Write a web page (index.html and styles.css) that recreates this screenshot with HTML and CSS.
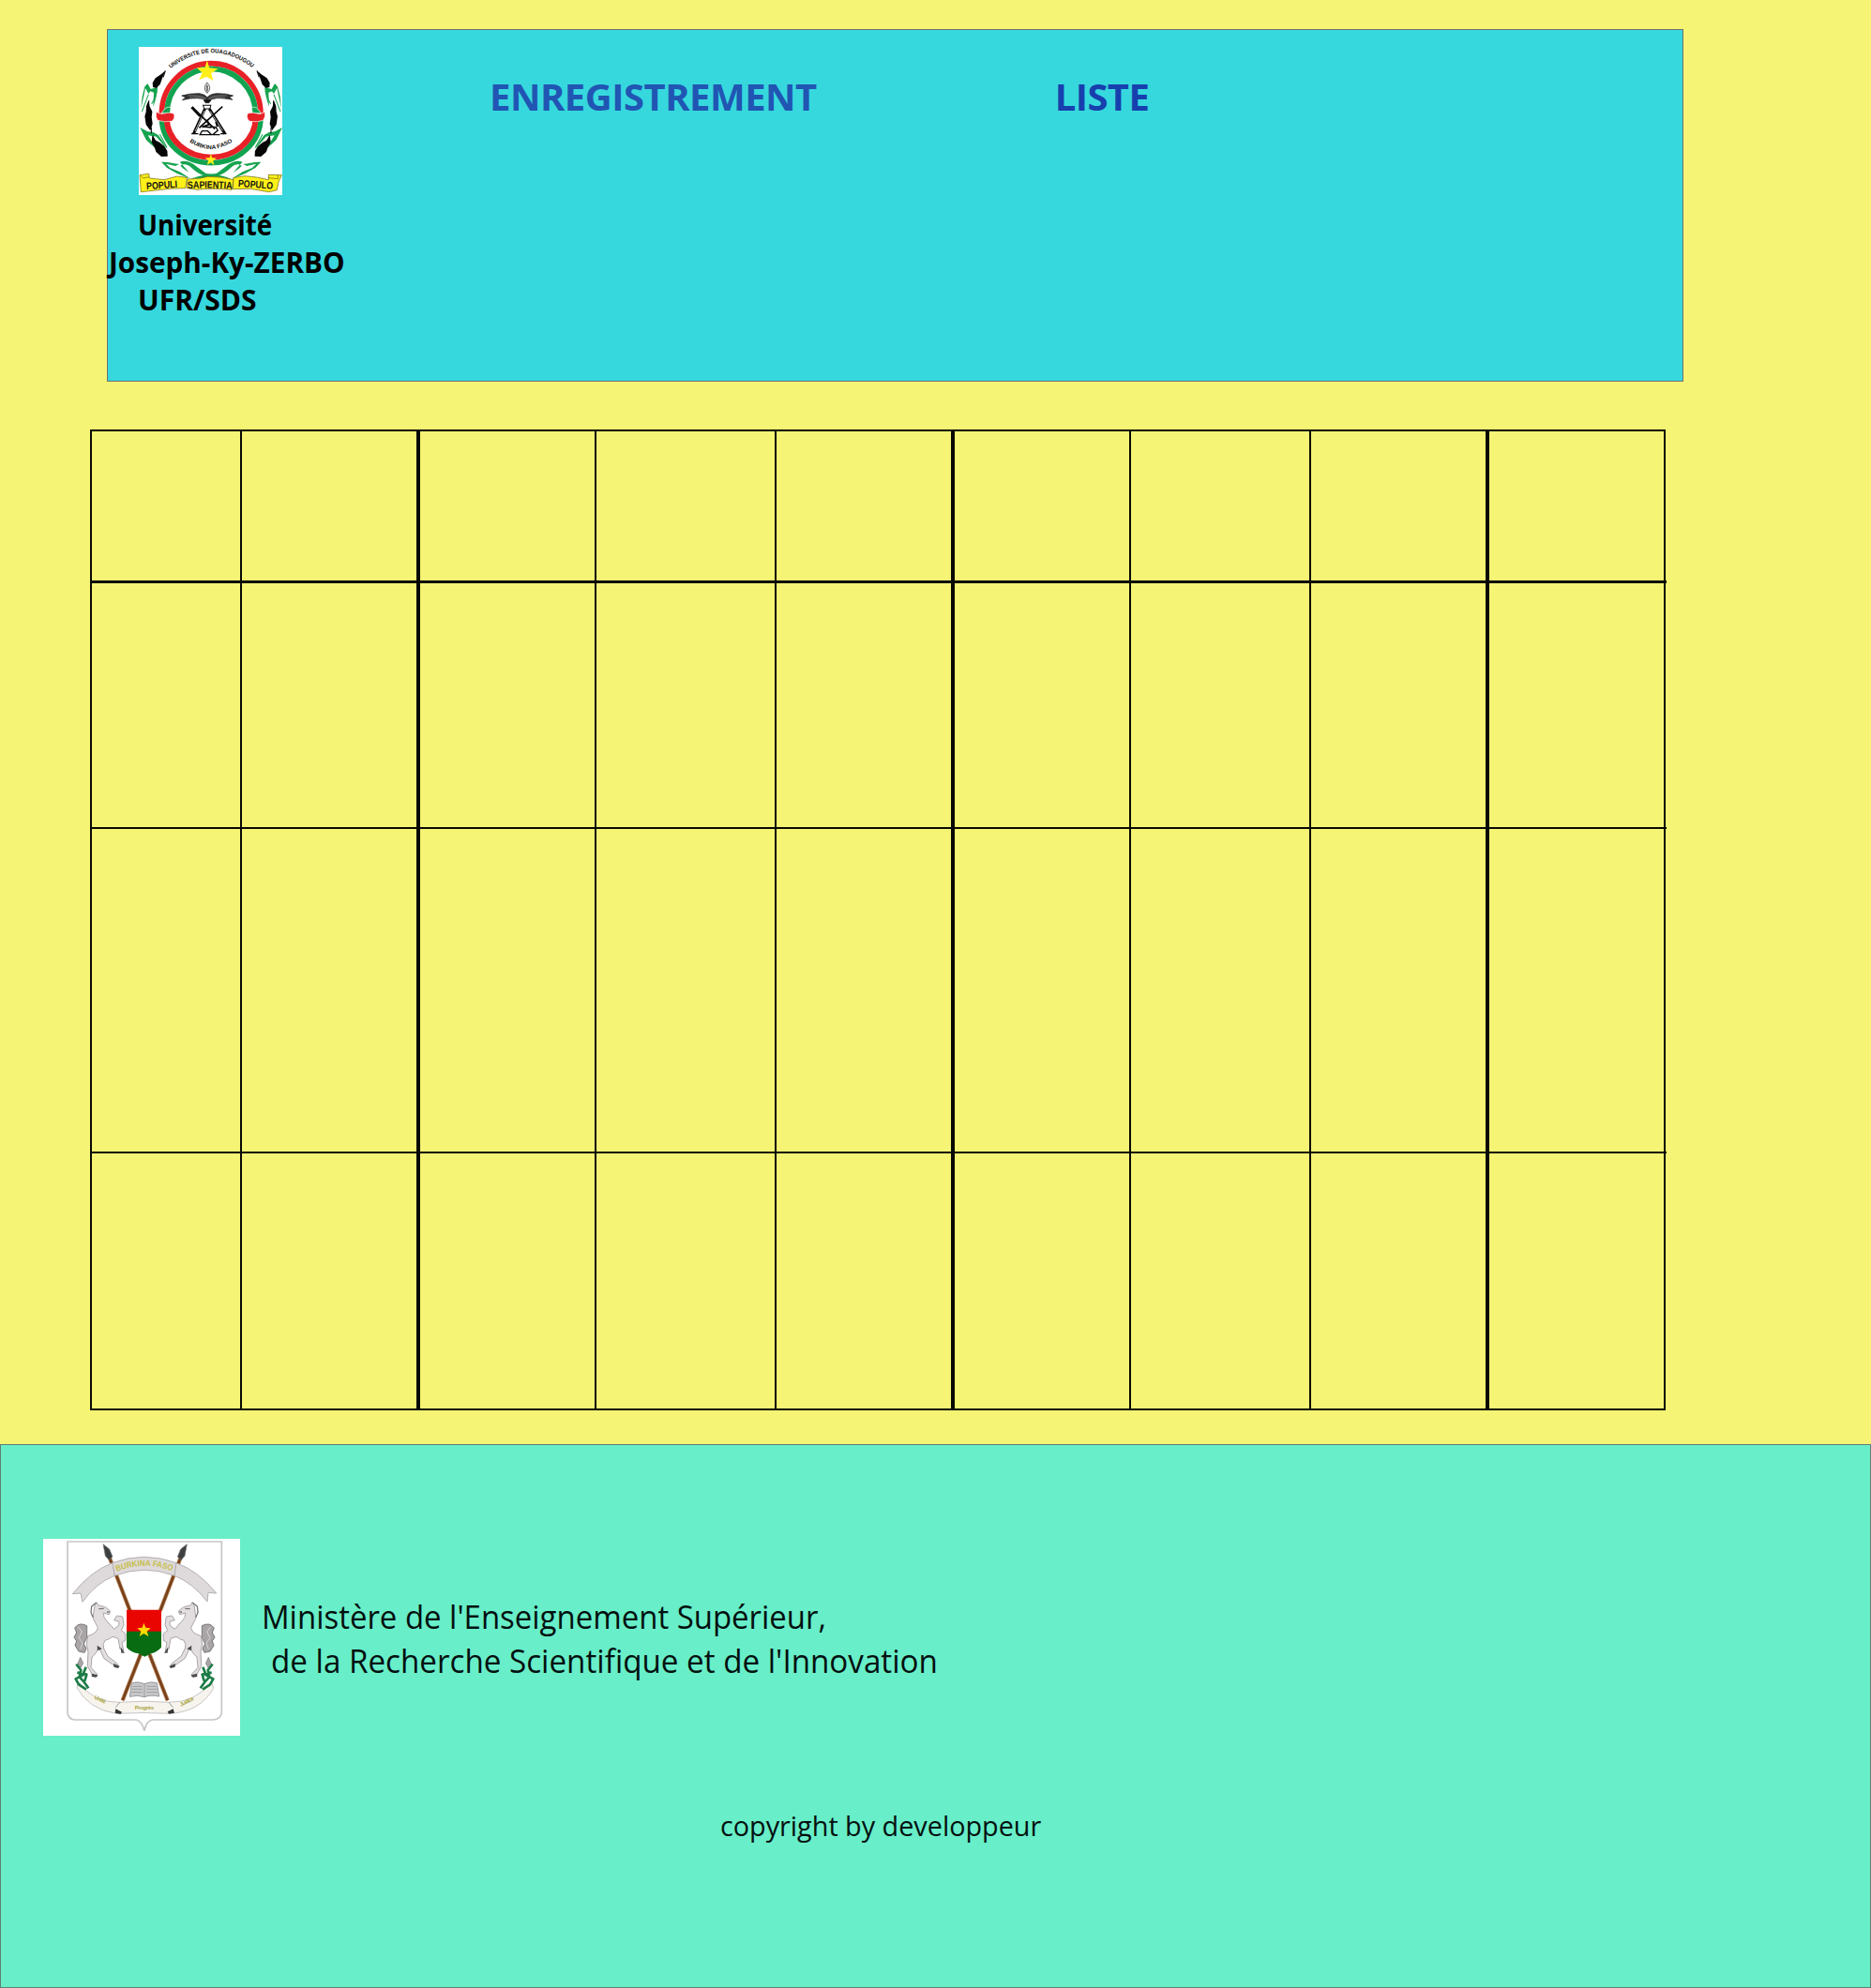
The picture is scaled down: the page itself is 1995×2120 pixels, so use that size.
FILE: index.html
```html
<!DOCTYPE html>
<html lang="fr">
<head>
<meta charset="utf-8">
<title>Université Joseph-Ky-ZERBO</title>
<link rel="stylesheet" href="styles.css">
</head>
<body>
<header class="header">
  <div class="brand">
    <svg class="brand-logo" viewBox="24 18 458 474" preserveAspectRatio="none" role="img" aria-label="Université de Ouagadougou">
      <defs>
        <path id="arc-top" d="M123 89Q254 -14 388 86"/>
        <path id="arc-bottom" d="M183 320Q254 371 327 318"/>
        <path id="motto-mid" d="M178 471Q250 468 326 473"/>
        <g id="branch">
          <path fill="#16a34f" d="M31 215L35 176 43 145 52 135 62 153 84 147 83 162 76 191 70 210 72 164 61 160 55 168 45 150 40 175Z"/>
          <path fill="#16a34f" d="M28 276L52 289 70 291 86 300 103 324 116 346 90 317 80 305 53 301 65 321 86 348 62 329 47 315Z"/>
          <path fill="none" stroke="#16a34f" stroke-width="3" d="M55 170L34 225M79 175L65 200M42 294L76 340M91 298L114 340"/>
          <path fill="#060606" d="M109 94L96 105 77 118 68 133 69 147 80 150 92 138 99 118Z"/>
          <path fill="#060606" d="M55 190L48 207 47 226 43 240 47 267 61 286 68 264 65 243 67 225 59 209Z"/>
          <path fill="#060606" d="M67 302L65 323 75 341 79 354 96 369 116 368 115 351 106 336 90 323 78 317Z"/>
          <path fill="none" stroke="#060606" stroke-width="3" d="M109 94L102 115M56 190V205M64 276V295M68 302L77 320"/>
          <path fill="#16a34f" d="M96 386C120 385 135 391 153 393L141 399 111 392 124 405 155 418 190 440 146 423 114 405Z"/>
          <path fill="#16a34f" d="M155 386C175 379 191 386 210 402L238 423C275 426 301 433 319 440L270 437C225 431 211 423 190 403 176 391 166 393 157 398L166 407 185 420Z"/>
        </g>
      </defs>
      <rect x="24" y="18" width="458" height="474" fill="#fff"/>
      <use href="#branch"/>
      <use href="#branch" transform="matrix(-1 0 0 1 510 0)"/>
      <g fill="none">
        <path stroke="#e82127" stroke-width="17" d="M97 232A158 161 0 0 1 413 232"/>
        <path stroke="#12a350" stroke-width="17" d="M114 232A141 144 0 0 1 396 232"/>
        <path stroke="#12a350" stroke-width="17" d="M97 244A158 145 0 0 0 413 244"/>
        <path stroke="#e82127" stroke-width="18" d="M113 244A142 127 0 0 0 397 244"/>
      </g>
      <g stroke="#fff" stroke-width="2">
        <path fill="#12a350" d="M96 230Q112 205 126 212L124 231Z"/>
        <path fill="#e82127" d="M80 226Q93 235 105 231 128 225 137 233 140 249 129 256 104 260 84 253 76 242 80 226Z"/>
        <path fill="#12a350" d="M414 230Q400 205 384 212L387 231Z"/>
        <path fill="#e82127" d="M426 226Q413 236 401 231 378 225 370 233 367 249 378 256 404 260 421 253 430 242 426 226Z"/>
      </g>
      <path fill="#ffef17" d="M242 61L249 85 277 88 255 103 262 126 240 113 216 124 227 101 209 85 235 84Z"/>
      <path fill="#ffef17" d="M254 361L258 373 272 374 261 383 265 397 254 388 242 395 246 382 236 373 250 373Z"/>
      <g class="seal-text">
        <text font-size="19"><textPath href="#arc-top" startOffset="3" textLength="284" lengthAdjust="spacingAndGlyphs">UNIVERSITE DE OUAGADOUGOU</textPath></text>
        <text font-size="18"><textPath href="#arc-bottom" startOffset="3" textLength="148" lengthAdjust="spacingAndGlyphs">BURKINA FASO</textPath></text>
      </g>
      <!-- flame and open book -->
      <g fill="none" stroke="#111" stroke-width="2">
        <path d="M242 132Q227 150 242 166 259 149 242 132ZM242 140Q238 151 242 160 247 151 242 140Z"/>
        <path fill="#333" d="M161 174Q190 166 217 167 236 170 242 180 251 169 272 167 300 166 325 174L313 179 323 187Q290 181 272 182 254 184 244 192 228 181 210 182 187 181 163 188L174 180Z"/>
        <path stroke="#aaa" stroke-width="1.5" d="M180 174Q218 170 238 183M186 180Q220 175 238 187M306 174Q266 170 247 183M300 180Q266 175 247 187"/>
        <path fill="#111" d="M231 188H255L248 197H237Z"/>
      </g>
      <!-- compass, pen and microscope -->
      <g stroke="#0a0a0a" fill="none">
        <path fill="#fff" stroke-width="3" d="M229 205H254L251 216H233Z"/>
        <path stroke-width="9" d="M235 216L199 296M249 216L299 296"/>
        <path stroke="#fff" stroke-width="2" d="M234 222L204 288M252 224L292 286"/>
        <path stroke-width="5" d="M291 209L217 277M194 211L267 281"/>
        <path stroke-width="9" d="M193 211L220 239"/>
        <path stroke-width="4" d="M192 296H214M285 296H304M219 299H256L244 287H226ZM251 273L270 275 276 285 260 299H283M228 273L256 276"/>
        <path stroke-width="6" d="M240 251L249 266 226 275M275 274L270 257"/>
      </g>
      <!-- motto ribbon -->
      <g fill="#fff01a" stroke="#675f08" stroke-width="2">
        <path d="M27 428L56 424 58 438 105 443 146 432 178 436 173 470 122 472 70 478 31 482Z"/>
        <path d="M480 428L438 427 438 443 400 435 362 431 326 437 325 473 380 472 439 482 465 476 470 450Z"/>
        <path d="M180 441Q216 442 243 433 281 432 326 443L321 475Q250 469 211 475L177 470Z"/>
        <path fill="none" d="M29 429L38 438 56 434M438 437L468 440V429"/>
      </g>
      <g class="seal-text">
        <text x="48" y="471" font-size="32" textLength="99" lengthAdjust="spacingAndGlyphs" transform="rotate(-4 97 464)">POPULI</text>
        <text font-size="32"><textPath href="#motto-mid" startOffset="2" textLength="142" lengthAdjust="spacingAndGlyphs">SAPIENTIA</textPath></text>
        <text x="341" y="469" font-size="32" textLength="111" lengthAdjust="spacingAndGlyphs" transform="rotate(4 396 460)">POPULO</text>
      </g>
    </svg>
    <h1 class="brand-name">
      <span class="brand-line indent narrow">Université</span>
      <span class="brand-line wide">Joseph-Ky-ZERBO</span>
      <span class="brand-line indent">UFR/SDS</span>
    </h1>
  </div>
  <nav class="nav">
    <a class="nav-link">ENREGISTREMENT</a>
    <a class="nav-link nav-list">LISTE</a>
  </nav>
</header>

<main class="table">
  <div class="row row-head"><i></i><i></i><i></i><i></i><i></i><i></i><i></i><i></i><i></i></div>
  <div class="row row-1"><i></i><i></i><i></i><i></i><i></i><i></i><i></i><i></i><i></i></div>
  <div class="row row-2"><i></i><i></i><i></i><i></i><i></i><i></i><i></i><i></i><i></i></div>
  <div class="row row-3"><i></i><i></i><i></i><i></i><i></i><i></i><i></i><i></i><i></i></div>
</main>

<footer class="footer">
  <div class="ministry">
    <svg class="arms" viewBox="18 33 630 630" role="img" aria-label="Burkina Faso">
      <defs>
        <path id="arms-arc" d="M250 139Q342 100 437 139"/>
        <g id="horse">
          <path fill="#a9a5a7" stroke="#77767a" stroke-width="3" d="M158 311Q133 298 119 318L125 333 117 348 125 360 120 374 132 393 150 397 156 384 148 369 158 349Z"/>
          <path fill="none" stroke="#d8d4d6" stroke-width="3" d="M130 314L142 330 132 350 144 366 137 386"/>
          <path fill="#e2dddf" stroke="#aaa5a8" stroke-width="3" d="M183 246L189 236 194 246Q220 248 233 265L229 275 211 270Q209 284 223 298 235 310 245 322L260 310 261 298 245 293 254 279 272 282 276 308 268 326 282 337 281 358 270 365 275 391 264 386 258 352 240 346Q231 354 216 358 207 369 212 384L225 409 254 431 259 442 243 437 213 416 195 378Q191 399 174 411L171 445 191 466 190 474 177 472 160 440 162 395 157 370 161 344Q190 336 193 317L177 286Z"/>
          <path fill="none" stroke="#77767a" stroke-width="4" d="M188 237L173 249 171 269 178 284M196 257L212 256M222 267L230 267"/>
          <path fill="#4b4a4c" d="M243 432L263 440 258 447 244 443ZM174 464L193 469 187 476 173 474ZM266 379L279 398 268 398ZM191 374L206 385 192 391Z"/>
          <path fill="none" stroke="#1d7c46" stroke-width="8" stroke-linejoin="round" d="M124 434L139 453 134 475 149 491 163 511M155 443L145 469 122 481 132 499 156 515M127 461L157 467 151 488"/>
          <path fill="#a9a5a7" stroke="#77767a" stroke-width="2" d="M137 412L129 432 138 445 146 431Z"/>
        </g>
        <g id="spear">
          <path stroke="#b98a5d" stroke-width="13" d="M230 92L296 264M330 402L272 550"/>
          <path stroke="#78401b" stroke-width="8" d="M230 92L296 264M330 402L272 550"/>
          <path fill="#3d4040" stroke="#777" stroke-width="2" d="M210 50L230 66 240 90 229 101 217 88Z"/>
        </g>
      </defs>
      <rect x="18" y="33" width="630" height="630" fill="#fff"/>
      <path fill="none" stroke="#c6c6c6" stroke-width="5" d="M96 42H589V592Q583 612 560 612H368Q348 615 342 647 333 615 316 612H120Q99 611 96 590Z"/>
      <path fill="#f7f4ee" stroke="#c9c5c4" stroke-width="3" d="M130 490Q177 558 263 556 343 549 420 556 506 557 557 490L563 511Q520 586 425 592 340 587 252 592 164 579 126 509Z"/>
      <use href="#spear"/>
      <use href="#spear" transform="matrix(-1 0 0 1 688 0)"/>
      <g fill="#dedadb" stroke="#b4b0b1" stroke-width="3">
        <path d="M240 110Q172 135 112 209L138 207 144 235Q188 173 247 151Z"/>
        <path d="M443 110Q513 134 572 207L546 205 543 234Q497 174 438 151Z"/>
        <path d="M240 110Q342 72 443 110L438 151Q342 114 247 151Z"/>
      </g>
      <text class="arms-name"><textPath href="#arms-arc" startOffset="4" textLength="181" lengthAdjust="spacingAndGlyphs">BURKINA FASO</textPath></text>
      <use href="#horse"/>
      <use href="#horse" transform="matrix(-1 0 0 1 684 0)"/>
      <path fill="#e80502" d="M285 260H396V330H285Z"/>
      <path fill="#086c12" d="M285 329H396V380Q382 396 363 400L343 410 322 400Q298 396 285 380Z"/>
      <path fill="#ffd900" d="M340 302L346 317 362 319 350 329 355 345 340 336 326 345 331 329 319 319 335 317Z"/>
      <path fill="#c9c8ca" stroke="#98989d" stroke-width="3" d="M301 494Q323 488 342 497 362 488 382 494L389 537Q362 531 342 539 319 531 295 538Z"/>
      <path fill="none" stroke="#88888d" stroke-width="2" d="M342 497V538M304 505H335M349 505H380M302 514H335M349 514H382M300 524H335M349 524H384"/>
      <path fill="none" stroke="#999" stroke-width="3" d="M263 556L250 572M420 556L433 572"/>
      <path fill="#353535" d="M250 577L270 587 266 594 248 590ZM434 577L416 586 420 593 438 590Z"/>
      <g class="arms-motto">
        <text x="180" y="544" textLength="39" transform="rotate(25 180 544)">Unité</text>
        <text x="311" y="579" textLength="61">Progrès</text>
        <text x="459" y="570" textLength="48" transform="rotate(-28 459 570)">Justice</text>
      </g>
    </svg>
    <p class="ministry-name">
      <span class="ministry-line first">Ministère de l'Enseignement Supérieur,</span>
      <span class="ministry-line second">de la Recherche Scientifique et de l'Innovation</span>
    </p>
  </div>
  <p class="copyright">copyright by developpeur</p>
</footer>
</body>
</html>
```
FILE: styles.css
```css
* {
  box-sizing: border-box;
}

body {
  margin: 0;
  width: 1995px;
  height: 2120px;
  display: flex;
  flex-direction: column;
  background: #f6f475;
  color: #03100f;
  font-family: "Open Sans", "Noto Sans", sans-serif;
}

h1,
p {
  margin: 0;
}

.header {
  display: flex;
  width: 1681px;
  height: 376px;
  margin: 31px 0 0 114px;
  border: 1px solid #707070;
  background: #36d8dd;
}

.brand {
  width: 407px;
  padding-top: 18px;
}

.brand-logo {
  display: block;
  width: 153px;
  height: 158px;
  margin-left: 33px;
}

.seal-text {
  fill: #101010;
  font-family: "Liberation Sans", sans-serif;
  font-weight: bold;
}

.brand-name {
  margin-top: 12px;
  padding-left: 1px;
  color: #000;
  font-size: 30px;
  font-weight: 700;
  line-height: 40px;
}

.brand-line {
  display: block;
  transform-origin: 0 0;
}

.indent {
  margin-left: 31px;
}

.narrow {
  transform: scaleX(0.925);
}

.wide {
  transform: scaleX(0.99);
}

.nav {
  display: flex;
  gap: 254px;
  padding-top: 44px;
  font-size: 40px;
  font-weight: 700;
  line-height: 54px;
  letter-spacing: -0.5px;
  color: #2155b3;
}

.nav-list {
  letter-spacing: -0.6px;
  color: #183fae;
}

.table {
  width: 1680px;
  height: 1046px;
  margin: 51px 0 36px 96px;
  border: 2px solid #080903;
}

.row {
  display: grid;
  grid-template-columns: 160px 190px 188px 192px 190px 188px 192px 190px 186px;
  width: 1679px;
  border-bottom: 2px solid #080903;
}

.row i {
  border-right: 2px solid #080903;
}

.row i:nth-child(3n + 2) {
  border-right-width: 4px;
}

.row i:last-child {
  border-right: 0;
}

.row-head {
  height: 162px;
  border-bottom-width: 3px;
}

.row-1 {
  height: 262px;
}

.row-2 {
  height: 346px;
}

.row-3 {
  height: 272px;
  border-bottom: 0;
}

.footer {
  height: 580px;
  padding: 100px 0 0 45px;
  border: 1px solid #5f7f75;
  background: #68eec8;
}

.ministry {
  display: flex;
  gap: 23px;
}

.arms {
  width: 210px;
  height: 210px;
}

.arms-name {
  fill: #c6bd49;
  font: bold 27px "Liberation Sans", sans-serif;
}

.arms-motto {
  fill: #aaa443;
  font: bold 18px "Liberation Sans", sans-serif;
}

.ministry-name {
  padding-top: 59px;
  font-size: 35px;
  line-height: 47px;
}

.ministry-line {
  display: block;
  transform-origin: 0 0;
}

.first {
  transform: scaleX(0.941);
}

.second {
  margin-left: 10px;
  transform: scaleX(0.948);
}

.copyright {
  margin: 76px 0 0 722px;
  font-size: 30px;
  line-height: 40px;
  transform: scaleX(0.959);
  transform-origin: 0 0;
}
```
